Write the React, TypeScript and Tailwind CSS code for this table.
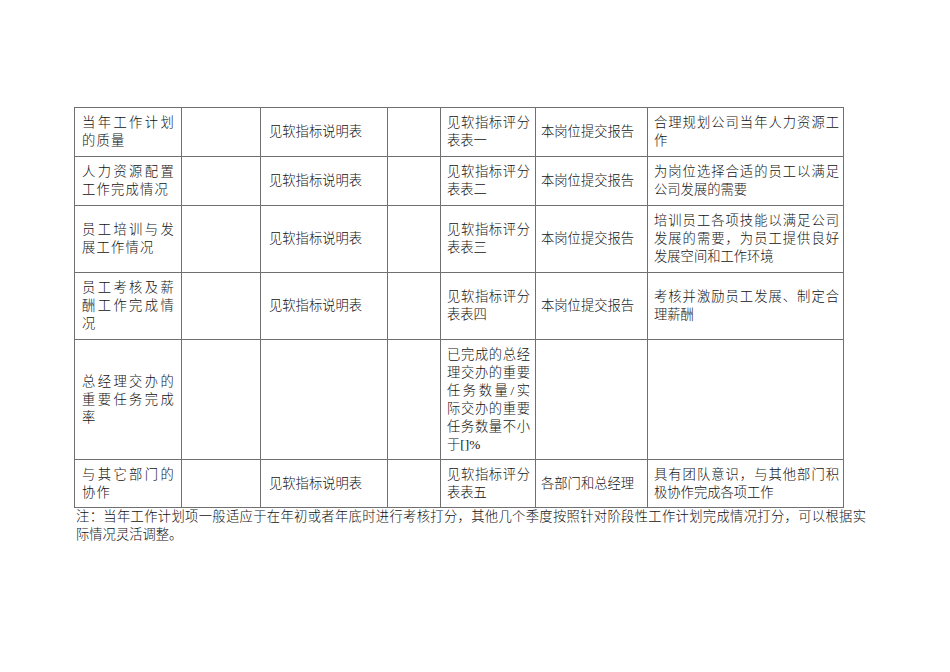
import React from 'react';

type Cell = string[];

// 7 columns: item, weight, indicator, blank, scoring, source, description
const rows: { h: number; cells: Cell[] }[] = [
  {
    h: 48,
    cells: [
      ['当年工作计划', '的质量'],
      [],
      ['见软指标说明表'],
      [],
      ['见软指标评分', '表表一'],
      ['本岗位提交报告'],
      ['合理规划公司当年人力资源工', '作'],
    ],
  },
  {
    h: 48,
    cells: [
      ['人力资源配置', '工作完成情况'],
      [],
      ['见软指标说明表'],
      [],
      ['见软指标评分', '表表二'],
      ['本岗位提交报告'],
      ['为岗位选择合适的员工以满足', '公司发展的需要'],
    ],
  },
  {
    h: 66,
    cells: [
      ['员工培训与发', '展工作情况'],
      [],
      ['见软指标说明表'],
      [],
      ['见软指标评分', '表表三'],
      ['本岗位提交报告'],
      ['培训员工各项技能以满足公司', '发展的需要，为员工提供良好', '发展空间和工作环境'],
    ],
  },
  {
    h: 66,
    cells: [
      ['员工考核及薪', '酬工作完成情', '况'],
      [],
      ['见软指标说明表'],
      [],
      ['见软指标评分', '表表四'],
      ['本岗位提交报告'],
      ['考核并激励员工发展、制定合', '理薪酬'],
    ],
  },
  {
    h: 119,
    cells: [
      ['总经理交办的', '重要任务完成', '率'],
      [],
      [],
      [],
      ['已完成的总经', '理交办的重要', '任务数量/实', '际交办的重要', '任务数量不小', '于[]%'],
      [],
      [],
    ],
  },
  {
    h: 47,
    cells: [
      ['与其它部门的', '协作'],
      [],
      ['见软指标说明表'],
      [],
      ['见软指标评分', '表表五'],
      ['各部门和总经理'],
      ['具有团队意识，与其他部门积', '极协作完成各项工作'],
    ],
  },
];

const cellPad = [
  'pl-[7px] pr-[6px] tracking-[1.2px]',
  'px-[6px]',
  'pl-[8px] pr-[4px]',
  'px-[6px]',
  'pl-[6px] pr-[5px]',
  'pl-[5px] pr-[4px]',
  'pl-[6px] pr-[4px]',
];

function Lines({ lines }: { lines: string[] }) {
  return (
    <div className="w-full">
      {lines.map((line, i) => {
        const last = i === lines.length - 1;
        return (
          <div
            key={i}
            className={`h-[18px] leading-[18px] ${
              !last && lines.length > 1 ? 'text-justify [text-align-last:justify]' : 'text-left'
            }`}
          >
            {line}
          </div>
        );
      })}
    </div>
  );
}

export default function App() {
  return (
    <div className="min-h-[672px] w-[950px] bg-white pt-[107px] pl-[74px] text-[13.3px] font-light text-[#111] font-['Liberation_Serif','Noto_Sans_CJK_SC',serif]">
      <div className="grid w-fit grid-cols-[106px_78px_126px_52px_94px_111px_195px] gap-px bg-[#707070] p-px">
        {rows.map((row, r) =>
          row.cells.map((cell, c) => (
            <div
              key={`${r}-${c}`}
              style={{ height: row.h }}
              className={`flex items-center bg-white ${cellPad[c]}`}
            >
              {cell.length > 0 && <Lines lines={cell} />}
            </div>
          ))
        )}
      </div>

      {/* note under the table */}
      <div className="ml-[2px] w-[790px]">
        <div className="h-[18px] leading-[18px] text-justify [text-align-last:justify]">
          注：当年工作计划项一般适应于在年初或者年底时进行考核打分，其他几个季度按照针对阶段性工作计划完成情况打分，可以根据实
        </div>
        <div className="h-[18px] leading-[18px]">际情况灵活调整。</div>
      </div>
    </div>
  );
}
